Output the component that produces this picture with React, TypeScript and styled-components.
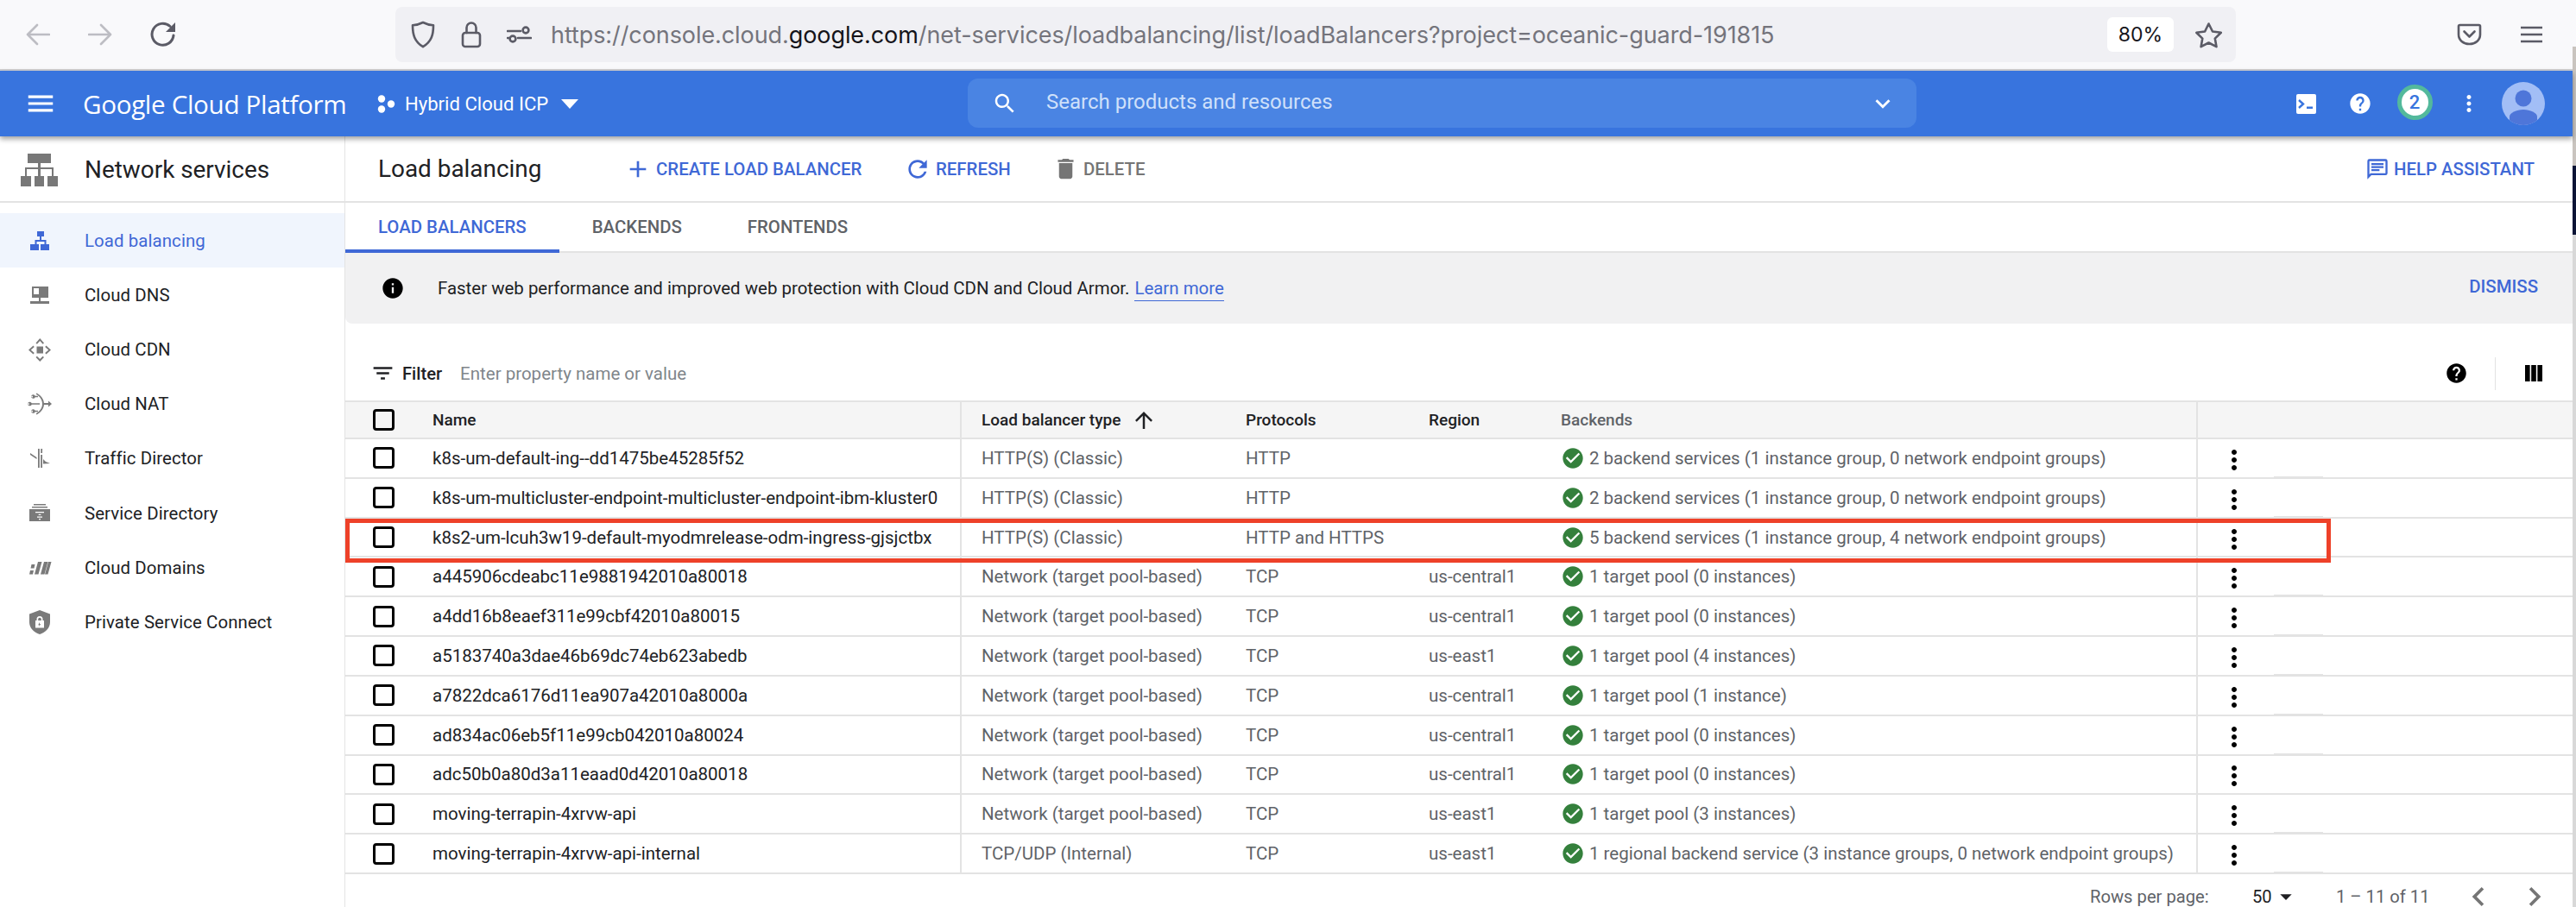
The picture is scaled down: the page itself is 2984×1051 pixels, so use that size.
import React from "react";
import styled, { createGlobalStyle } from "styled-components";

const Global = createGlobalStyle`
  html, body { margin: 0; padding: 0; background: #fff; }
  body { font-family: Roboto, "Liberation Sans", sans-serif; color: #202124; }
  * { box-sizing: border-box; }
`;

const BLUE = "#3f68d6";
const GREY = "#757575";
const LINE = "#e3e3e3";

const P = {
  menu: "M3 18h18v-2H3v2zm0-5h18v-2H3v2zm0-7v2h18V6H3z",
  search: "M15.5 14h-.79l-.28-.27C15.41 12.59 16 11.11 16 9.5 16 5.91 13.09 3 9.5 3S3 5.91 3 9.5 5.91 16 9.5 16c1.61 0 3.09-.59 4.23-1.57l.27.28v.79l5 4.99L20.49 19l-4.99-5zm-6 0C7.01 14 5 11.99 5 9.5S7.01 5 9.5 5 14 7.01 14 9.5 11.99 14 9.5 14z",
  refresh: "M17.65 6.35C16.2 4.9 14.21 4 12 4c-4.42 0-7.99 3.58-7.99 8s3.57 8 7.99 8c3.73 0 6.84-2.55 7.73-6h-2.08c-.82 2.33-3.04 4-5.65 4-3.31 0-6-2.69-6-6s2.69-6 6-6c1.66 0 3.14.69 4.22 1.78L13 11h7V4l-2.35 2.35z",
  del: "M6 19c0 1.1.9 2 2 2h8c1.1 0 2-.9 2-2V7H6v12zM19 4h-3.5l-1-1h-5l-1 1H5v2h14V4z",
  help: "M12 2C6.48 2 2 6.48 2 12s4.48 10 10 10 10-4.48 10-10S17.52 2 12 2zm1 17h-2v-2h2v2zm2.07-7.75l-.9.92C13.45 12.9 13 13.5 13 15h-2v-.5c0-1.1.45-2.1 1.17-2.83l1.24-1.26c.37-.36.59-.86.59-1.41 0-1.1-.9-2-2-2s-2 .9-2 2H8c0-2.21 1.79-4 4-4s4 1.79 4 4c0 .88-.36 1.68-.93 2.25z",
  info: "M12 2C6.48 2 2 6.48 2 12s4.48 10 10 10 10-4.48 10-10S17.52 2 12 2zm1 15h-2v-6h2v6zm0-8h-2V7h2v2z",
  more: "M12 8c1.1 0 2-.9 2-2s-.9-2-2-2-2 .9-2 2 .9 2 2 2zm0 2c-1.1 0-2 .9-2 2s.9 2 2 2 2-.9 2-2-.9-2-2-2zm0 6c-1.1 0-2 .9-2 2s.9 2 2 2 2-.9 2-2-.9-2-2-2z",
  check: "M12 2C6.48 2 2 6.48 2 12s4.48 10 10 10 10-4.48 10-10S17.52 2 12 2zm-2 15l-5-5 1.41-1.41L10 14.17l7.59-7.59L19 8l-9 9z",
  filter: "M10 18h4v-2h-4v2zM3 6v2h18V6H3zm3 7h12v-2H6v2z",
  up: "M4 12l1.41 1.41L11 7.83V20h2V7.83l5.58 5.59L20 12l-8-8-8 8z",
  add: "M19 13h-6v6h-2v-6H5v-2h6V5h2v6h6v2z",
  left: "M15.41 7.41L14 6l-6 6 6 6 1.41-1.41L10.83 12z",
  right: "M10 6L8.59 7.41 13.17 12l-4.58 4.59L10 18l6-6z",
  drop: "M7 10l5 5 5-5z",
  expand: "M16.59 8.59L12 13.17 7.41 8.59 6 10l6 6 6-6z",
  assistant: "M20 2H4a2 2 0 0 0-2 2v18l4-4h14a2 2 0 0 0 2-2V4a2 2 0 0 0-2-2zm0 14H5.2L4 17.2V4h16v12zM6 12h8v2H6zM6 9h12v2H6zM6 6h12v2H6z",
};

const Svg = styled.svg<{ $c?: string }>`
  display: block;
  flex: none;
  fill: ${(p) => p.$c || "currentColor"};
`;

function Ic({ d, s, c }: { d: string; s: number; c?: string }) {
  return (
    <Svg viewBox="0 0 24 24" width={s} height={s} $c={c}>
      <path d={d} />
    </Svg>
  );
}

const Page = styled.div`
  width: 2984px;
  height: 1051px;
  overflow: hidden;
  display: flex;
  background: #fff;
`;
const Main = styled.div`
  width: 2980px;
  flex: none;
  display: flex;
  flex-direction: column;
`;
const Edge = styled.div`
  width: 4px;
  flex: none;
  display: flex;
  flex-direction: column;
  background: #d8d8d8;
`;
const EdgeTop = styled.div`
  height: 54px;
  background: #f9f9fb;
`;
const EdgeMid = styled.div`
  height: 138px;
  background: #c9c4bf;
`;
const EdgeDark = styled.div`
  height: 80px;
  background: #0b1436;
`;

/* browser bar */
const BrowserBar = styled.div`
  height: 82px;
  flex: none;
  background: #f9f9fb;
  border-bottom: 2px solid #cfcfd2;
  display: flex;
  align-items: flex-start;
  padding-left: 30px;
`;
const NavGroup = styled.div`
  width: 428px;
  height: 80px;
  display: flex;
  align-items: center;
  gap: 44px;
`;
const UrlBar = styled.div`
  width: 2132px;
  height: 64px;
  margin-top: 8px;
  background: #f0f0f4;
  border-radius: 8px;
  display: flex;
  align-items: center;
  padding: 0 15px 0 17px;
`;
const SecIcons = styled.div`
  display: flex;
  align-items: center;
  gap: 29px;
  color: #5b5b66;
`;
const UrlText = styled.div`
  margin-left: 22px;
  font: 400 27px "Inter", sans-serif;
  letter-spacing: -0.08px;
  color: #74747c;
  white-space: nowrap;
  flex: 1;
`;
const UrlHost = styled.span`
  color: #15141a;
`;
const ZoomBadge = styled.div`
  width: 77px;
  height: 40px;
  background: #fff;
  border-radius: 6px;
  display: flex;
  align-items: center;
  justify-content: center;
  font: 400 23px "Inter", sans-serif;
  color: #15141a;
  margin-right: 24px;
`;
const ToolGroup = styled.div`
  height: 80px;
  margin-left: 256px;
  display: flex;
  align-items: center;
  gap: 45px;
  color: #5b5b66;
`;
const Stroke = styled.svg`
  display: block;
  flex: none;
  fill: none;
  stroke: currentColor;
  stroke-width: 2.6;
  stroke-linecap: round;
  stroke-linejoin: round;
`;
const Faded = styled(Stroke)`
  color: #bdbdc3;
`;
const Dark = styled(Stroke)`
  color: #5b5b66;
`;

/* top bar */
const TopBar = styled.div`
  height: 76px;
  flex: none;
  background: #3874de;
  box-shadow: 0 3px 6px rgba(0, 0, 0, 0.38);
  position: relative;
  z-index: 2;
  display: flex;
  align-items: center;
  color: #fff;
`;
const TopLeft = styled.div`
  width: 1121px;
  flex: none;
  display: flex;
  align-items: center;
  padding-left: 28px;
`;
const Brand = styled.div`
  width: 341px;
  margin-left: 30px;
  flex: none;
  font: 400 29.6px "Open Sans", sans-serif;
  letter-spacing: -0.33px;
  white-space: nowrap;
`;
const ProjectName = styled.div`
  margin-left: 11px;
  font: 400 22.1px Roboto, sans-serif;
  white-space: nowrap;
`;
const Caret = styled.svg`
  margin-left: 15px;
  fill: #fff;
`;
const SearchBox = styled.div`
  width: 1099px;
  height: 57px;
  flex: none;
  margin-top: -1px;
  background: #4a84e3;
  border-radius: 12px;
  display: flex;
  align-items: center;
  padding: 0 22px 0 28px;
`;
const SearchText = styled.div`
  margin-left: 33px;
  padding-bottom: 3px;
  flex: 1;
  font: 400 24px Roboto, sans-serif;
  color: #cfe0fa;
`;
const TopRight = styled.div`
  margin-left: auto;
  padding-right: 25.5px;
  display: flex;
  align-items: center;
`;
const TopSlot = styled.div`
  width: 63px;
  height: 76px;
  display: flex;
  align-items: center;
  justify-content: center;
`;
const Badge = styled.div`
  width: 41px;
  height: 41px;
  margin-top: -3px;
  border-radius: 50%;
  background: #fff;
  border: 5px solid #53b99c;
  display: flex;
  align-items: center;
  justify-content: center;
  font: 500 22px Roboto, sans-serif;
  color: #3874de;
`;

/* body */
const Body = styled.div`
  flex: 1;
  display: flex;
  min-height: 0;
`;
const Sidebar = styled.nav`
  width: 400px;
  flex: none;
  border-right: 1px solid ${LINE};
`;
const SideHead = styled.div`
  height: 77px;
  border-bottom: 2px solid ${LINE};
  display: flex;
  align-items: center;
  padding: 2px 0 0 24px;
  gap: 31px;
`;
const SideTitle = styled.div`
  font: 400 27.9px Roboto, sans-serif;
  color: #202124;
  white-space: nowrap;
`;
const SideList = styled.div`
  padding-top: 12px;
`;
const SideItem = styled.div<{ $active?: boolean }>`
  height: 63.2px;
  display: flex;
  align-items: center;
  padding-left: 32px;
  gap: 38px;
  font: 400 20.4px Roboto, sans-serif;
  letter-spacing: 0.1px;
  background: ${(p) => (p.$active ? "#f0f5fd" : "transparent")};
  color: ${(p) => (p.$active ? BLUE : "#202124")};
`;
const SideGlyph = styled.svg<{ $active?: boolean }>`
  display: block;
  flex: none;
  fill: currentColor;
  color: ${(p) => (p.$active ? BLUE : "#7a7a7a")};
`;

const Content = styled.div`
  flex: 1;
  min-width: 0;
  display: flex;
  flex-direction: column;
`;
const PageHead = styled.div`
  height: 77px;
  flex: none;
  border-bottom: 2px solid ${LINE};
  display: flex;
  align-items: center;
  padding-left: 38px;
`;
const PageTitle = styled.div`
  width: 285px;
  flex: none;
  font: 400 27.9px Roboto, sans-serif;
  color: #202124;
`;
const ActionBtn = styled.div<{ $muted?: boolean; $w?: number }>`
  width: ${(p) => (p.$w ? `${p.$w}px` : "auto")};
  flex: none;
  display: flex;
  align-items: center;
  gap: 5px;
  font: 500 20.4px Roboto, sans-serif;
  color: ${(p) => (p.$muted ? GREY : BLUE)};
  white-space: nowrap;
`;
const HeadEnd = styled(ActionBtn)`
  margin-left: auto;
  padding-right: 44px;
`;
const TabBar = styled.div`
  height: 58px;
  flex: none;
  border-bottom: 2px solid ${LINE};
  display: flex;
`;
const Tab = styled.div<{ $active?: boolean }>`
  height: 58px;
  padding: 1px 38px 0;
  display: flex;
  align-items: center;
  font: 500 20.4px Roboto, sans-serif;
  color: ${(p) => (p.$active ? BLUE : "#5f6368")};
  border-bottom: 4px solid ${(p) => (p.$active ? BLUE : "transparent")};
`;
const Banner = styled.div`
  height: 82px;
  flex: none;
  background: #f1f1f2;
  border-bottom-left-radius: 8px;
  display: flex;
  align-items: center;
  padding: 0 40px 0 41px;
  font: 400 20.45px Roboto, sans-serif;
  color: #202124;
`;
const BannerText = styled.div`
  margin-left: 38px;
  flex: 1;
`;
const LearnMore = styled.span`
  color: ${BLUE};
  border-bottom: 1px solid ${BLUE};
  padding-bottom: 2px;
  margin-left: 6px;
`;
const Dismiss = styled.div`
  padding-bottom: 4px;
  font: 500 20.4px Roboto, sans-serif;
  color: ${BLUE};
`;
const FilterRow = styled.div`
  height: 89px;
  flex: none;
  display: flex;
  align-items: center;
  padding: 26px 35px 0 29px;
`;
const FilterLabel = styled.div`
  margin-left: 8px;
  font: 500 20.2px Roboto, sans-serif;
  color: #202124;
`;
const FilterInput = styled.div`
  margin-left: 21px;
  flex: 1;
  font: 400 20.5px Roboto, sans-serif;
  color: #80868b;
`;
const FilterDivider = styled.div`
  width: 1px;
  height: 38px;
  background: ${LINE};
  margin: 0 34px 0 31px;
`;

/* table */
const Table = styled.div`
  flex: none;
  display: flex;
  flex-direction: column;
`;
const Row = styled.div<{ $head?: boolean }>`
  height: ${(p) => (p.$head ? "45px" : "45.82px")};
  flex: none;
  position: relative;
  display: grid;
  grid-template-columns: 101px 611px 331px 212px 153px 736px 1fr;
  align-items: stretch;
  background: ${(p) => (p.$head ? "#f5f5f5" : "#fff")};
  border-top: ${(p) => (p.$head ? `2px solid ${LINE}` : "none")};
  border-bottom: 2px solid ${LINE};
`;
const Cell = styled.div<{ $tone?: string; $head?: boolean; $rule?: boolean }>`
  display: flex;
  align-items: center;
  white-space: nowrap;
  min-width: 0;
  font-family: Roboto, sans-serif;
  font-size: ${(p) => (p.$head ? "19px" : "20.5px")};
  font-weight: ${(p) => (p.$head ? 500 : 400)};
  color: ${(p) => p.$tone || "#5f6368"};
  ${(p) => (p.$rule ? `border-left: 2px solid ${LINE}; padding-left: 23px;` : "")}
`;
const CheckCell = styled(Cell)`
  padding-left: 32px;
`;
const Box = styled.div`
  width: 25px;
  height: 25px;
  border: 3.5px solid #000;
  border-radius: 4px;
`;
const SortArrow = styled.span`
  margin-left: 12px;
  display: flex;
`;
const Status = styled.span`
  display: flex;
  align-items: center;
  gap: 5px;
`;
const ActionCell = styled.div<{ $tick?: boolean }>`
  position: relative;
  border-left: 2px solid ${LINE};
  display: flex;
  align-items: center;
  padding: 4px 0 0 24px;
  &::after {
    content: "";
    display: ${(p) => (p.$tick ? "block" : "none")};
    position: absolute;
    left: 88px;
    width: 57px;
    bottom: 0;
    height: 1px;
    background: ${LINE};
  }
`;
const Highlight = styled.div`
  position: absolute;
  left: 0;
  top: 0;
  width: 2300px;
  height: 51px;
  border: 5px solid #ee4129;
  z-index: 1;
`;

const Footer = styled.div`
  height: 50px;
  flex: none;
  display: flex;
  align-items: center;
  justify-content: flex-end;
  padding: 2px 22px 0 0;
  font: 400 20.2px Roboto, sans-serif;
  color: #5f6368;
`;
const PerPage = styled.div`
  width: 188px;
`;
const PerValue = styled.div`
  display: flex;
  align-items: center;
  color: #202124;
  width: 97px;
`;
const PageRange = styled.div`
  width: 143px;
`;
const PagerBtns = styled.div`
  display: flex;
  gap: 21px;
`;

type R = { name: string; type: string; proto: string; region: string; back: string };
const svc2 = "2 backend services (1 instance group, 0 network endpoint groups)";
const NET = "Network (target pool-based)";
const rows: R[] = [
  { name: "k8s-um-default-ing--dd1475be45285f52", type: "HTTP(S) (Classic)", proto: "HTTP", region: "", back: svc2 },
  { name: "k8s-um-multicluster-endpoint-multicluster-endpoint-ibm-kluster0", type: "HTTP(S) (Classic)", proto: "HTTP", region: "", back: svc2 },
  { name: "k8s2-um-lcuh3w19-default-myodmrelease-odm-ingress-gjsjctbx", type: "HTTP(S) (Classic)", proto: "HTTP and HTTPS", region: "", back: "5 backend services (1 instance group, 4 network endpoint groups)" },
  { name: "a445906cdeabc11e9881942010a80018", type: NET, proto: "TCP", region: "us-central1", back: "1 target pool (0 instances)" },
  { name: "a4dd16b8eaef311e99cbf42010a80015", type: NET, proto: "TCP", region: "us-central1", back: "1 target pool (0 instances)" },
  { name: "a5183740a3dae46b69dc74eb623abedb", type: NET, proto: "TCP", region: "us-east1", back: "1 target pool (4 instances)" },
  { name: "a7822dca6176d11ea907a42010a8000a", type: NET, proto: "TCP", region: "us-central1", back: "1 target pool (1 instance)" },
  { name: "ad834ac06eb5f11e99cb042010a80024", type: NET, proto: "TCP", region: "us-central1", back: "1 target pool (0 instances)" },
  { name: "adc50b0a80d3a11eaad0d42010a80018", type: NET, proto: "TCP", region: "us-central1", back: "1 target pool (0 instances)" },
  { name: "moving-terrapin-4xrvw-api", type: NET, proto: "TCP", region: "us-east1", back: "1 target pool (3 instances)" },
  { name: "moving-terrapin-4xrvw-api-internal", type: "TCP/UDP (Internal)", proto: "TCP", region: "us-east1", back: "1 regional backend service (3 instance groups, 0 network endpoint groups)" },
];

const sideIcons: Record<string, React.ReactNode> = {
  lb: <path d="M11 3h8v6h-3v4h5.5v5H25v7H15v-7h4.5v-3h-9v3H13v7H3v-7h5.5v-5H14V9h-3z" />,
  dns: <path fillRule="evenodd" d="M5 4h19v13h-9v4h10v3H3v-3h10v-4H5zm2 2v7h6V6z" />,
  cdn: (
    <g>
      <rect x="10.5" y="10.5" width="7.5" height="8" />
      <path d="M6.5 9.5 1 14.5l5.5 5 1.3-1.4-4-3.6 4-3.6zM21.500 9.500l5.500 5-5.500 5-1.300-1.400 4-3.600-4-3.600zM9.500 6.500 14.250 1 19 6.500l-1.400 1.200-3.350-3.800-3.350 3.800zM9.500 23 14.250 28 19 23l-1.400-1.300-3.350 3.400-3.350-3.400z" />
    </g>
  ),
  nat: (
    <g>
      <path d="M10.500 1.500c5.500 3 8.500 7.500 8.500 12.500s-3 9.500-8.500 12.500l-.8-1.300c4.700-2.800 7.300-6.700 7.300-11.200S14.400 5.600 9.700 2.800z" />
      <path d="M19 13h5V10.500l4 3.500-4 3.500V15h-5z" />
      <path fillRule="evenodd" d="M4 5.500a2.500 2.500 0 0 1 4.800-.8H12v1.600H8.800A2.500 2.500 0 0 1 4 5.500zm2 0a.8.800 0 1 0 0 .1zM0 14a2.500 2.500 0 0 1 4.800-.8H14v1.600H4.800A2.500 2.500 0 0 1 0 14zm2 0a.8.800 0 1 0 0 .1zM4 22.500a2.500 2.500 0 0 1 4.800-.8H12v1.600H8.800A2.500 2.500 0 0 1 4 22.500zm2 0a.8.800 0 1 0 0 .1z" />
    </g>
  ),
  td: <path d="M12 3h1.800v22H12zM15.300 3h1.800l-.1 5h-1.700zM15.200 10h1.800v15h-1.800zM3 8l7.500 5v2L3 10zM26 20l-8 .5v-5.500l3 3z" />,
  sd: (
    <g>
      <path d="M7 3h14v1.500H7zM5 6h18v1.500H5z" />
      <path fillRule="evenodd" d="M2 9h24v14H2zm7 3v1.300h10V12zm5 2.500-2 1.500h4zm-3 3v1.200h6V17.500zm2 2.500v1.300h2V20z" />
    </g>
  ),
  dom: (
    <g>
      <path d="M3 17h4l-1 4.500H2zM4.500 10h4l-1 4.500h-4z" />
      <path d="M12 7h4.500l-4 14.500H8zM19 7h4.500l-4 14.500H15zM24 7h3.500l-4 14.500H20z" />
    </g>
  ),
  psc: <path fillRule="evenodd" d="M14 0 26 4.500V14c0 6.500-5 11.500-12 14C7 25.500 2 20.500 2 14V4.500zm-3.500 12v-1.500a3.500 3.500 0 0 1 7 0V12H19v8.500H9V12zm1.700 0h3.600v-1.500a1.800 1.800 0 0 0-3.600 0zM14 14l-1.800 3.200h1.300L13.200 19l2-3h-1.200z" />,
};

const sideItems: { key: string; label: string; active?: boolean }[] = [
  { key: "lb", label: "Load balancing", active: true },
  { key: "dns", label: "Cloud DNS" },
  { key: "cdn", label: "Cloud CDN" },
  { key: "nat", label: "Cloud NAT" },
  { key: "td", label: "Traffic Director" },
  { key: "sd", label: "Service Directory" },
  { key: "dom", label: "Cloud Domains" },
  { key: "psc", label: "Private Service Connect" },
];

export default function App() {
  return (
    <Page>
      <Global />
      <Main>
        <BrowserBar>
          <NavGroup>
            <Faded width="28" height="28" viewBox="0 0 28 28"><path d="M27 14H2M13 3 2 14l11 11" /></Faded>
            <Faded width="28" height="28" viewBox="0 0 28 28"><path d="M1 14h25M15 3l11 11-11 11" /></Faded>
            <Dark width="30" height="30" viewBox="0 0 30 30">
              <path d="M27 16a12.500 12.500 0 1 1-4-10.500" strokeWidth="3" />
              <path d="M29 1v11H18z" fill="#5b5b66" stroke="none" />
            </Dark>
          </NavGroup>
          <UrlBar>
            <SecIcons>
              <Stroke width="30" height="32" viewBox="0 0 30 32" strokeWidth="2.400">
                <path d="M15 2c4 2 8 3.200 12 3.200 0 11-2 19-12 25C5 24 3 16 3 5.200 7 5.200 11 4 15 2z" />
              </Stroke>
              <Stroke width="24" height="32" viewBox="0 0 24 32">
                <path d="M6.500 14V8a5.500 5.500 0 0 1 11 0v6" />
                <rect x="2" y="14" width="20" height="16" rx="3" />
              </Stroke>
              <Stroke width="29" height="20" viewBox="0 0 29 20">
                <path d="M1 6h15M1 14h2M13 14h15" />
                <circle cx="22" cy="5" r="3.400" />
                <circle cx="7" cy="15" r="3.400" />
              </Stroke>
            </SecIcons>
            <UrlText>
              https://console.cloud.<UrlHost>google.com</UrlHost>/net-services/loadbalancing/list/loadBalancers?project=oceanic-guard-191815
            </UrlText>
            <ZoomBadge>80%</ZoomBadge>
            <Dark width="33" height="31" viewBox="0 0 33 31">
              <path d="M16.500 2.500 21 11.500l9.800 1.300-7 6.800 1.700 9.600-9-4.700-8.900 4.700 1.700-9.600-7-6.800 9.800-1.300z" />
            </Dark>
          </UrlBar>
          <ToolGroup>
            <Stroke width="29" height="26" viewBox="0 0 29 26">
              <path d="M2 3.500C2 2.500 2.700 2 3.500 2h22c.8 0 1.500.5 1.500 1.500V13c0 6.500-5.500 11-12.500 11S2 19.500 2 13z" />
              <path d="m8.500 9.500 6 6 6-6" />
            </Stroke>
            <Stroke width="25" height="20" viewBox="0 0 25 20" strokeWidth="3">
              <path d="M0 2h25M0 10h25M0 18h25" />
            </Stroke>
          </ToolGroup>
        </BrowserBar>

        <TopBar>
          <TopLeft>
            <Ic d={P.menu} s={38} />
            <Brand>Google Cloud Platform</Brand>
            <svg width="21" height="21" viewBox="0 0 21 21" fill="#fff">
              <circle cx="5" cy="4.500" r="4.200" />
              <circle cx="5" cy="16.500" r="4.200" />
              <circle cx="16" cy="10.500" r="4.200" />
            </svg>
            <ProjectName>Hybrid Cloud ICP</ProjectName>
            <Caret width="20" height="11" viewBox="0 0 20 11">
              <path d="M0 0h20L10 11z" />
            </Caret>
          </TopLeft>
          <SearchBox>
            <Ic d={P.search} s={30} />
            <SearchText>Search products and resources</SearchText>
            <Ic d={P.expand} s={34} />
          </SearchBox>
          <TopRight>
            <TopSlot>
              <svg width="23" height="23" viewBox="0 0 23 23">
                <rect width="23" height="23" rx="2" fill="#fff" />
                <path d="M3 7l5 4.500L3 16" fill="none" stroke="#3874de" strokeWidth="2.400" />
                <path d="M12 14.500h7v2.500h-7z" fill="#3874de" />
              </svg>
            </TopSlot>
            <TopSlot><Ic d={P.help} s={28} c="#fff" /></TopSlot>
            <TopSlot><Badge>2</Badge></TopSlot>
            <TopSlot><Ic d={P.more} s={30} c="#fff" /></TopSlot>
            <TopSlot>
              <svg width="50" height="50" viewBox="0 0 50 50">
                <defs>
                  <clipPath id="av"><circle cx="25" cy="25" r="25" /></clipPath>
                </defs>
                <circle cx="25" cy="25" r="25" fill="#a2bef6" />
                <g clipPath="url(#av)" fill="#4e76d9">
                  <circle cx="25" cy="19" r="9.500" />
                  <path d="M9 50V40c0-4 8-8 16-8s16 4 16 8v10z" />
                </g>
              </svg>
            </TopSlot>
          </TopRight>
        </TopBar>

        <Body>
          <Sidebar>
            <SideHead>
              <svg width="43" height="38" viewBox="0 0 43 38" fill="#787878">
                <path d="M8 0h27v11H23v5h15v10h5v12H31V26h5v-8H23v8h4v12H16V26h4v-8H7v8h5v12H0V26h5V16h15v-5H8z" />
              </svg>
              <SideTitle>Network services</SideTitle>
            </SideHead>
            <SideList>
              {sideItems.map((it) => (
                <SideItem key={it.key} $active={it.active}>
                  <SideGlyph width="28" height="28" viewBox="0 0 28 28" $active={it.active}>
                    {sideIcons[it.key]}
                  </SideGlyph>
                  {it.label}
                </SideItem>
              ))}
            </SideList>
          </Sidebar>

          <Content>
            <PageHead>
              <PageTitle>Load balancing</PageTitle>
              <ActionBtn $w={324}><Ic d={P.add} s={32} c={BLUE} />CREATE LOAD BALANCER</ActionBtn>
              <ActionBtn $w={172}><Ic d={P.refresh} s={32} c={BLUE} />REFRESH</ActionBtn>
              <ActionBtn $muted><Ic d={P.del} s={31} c={GREY} />DELETE</ActionBtn>
              <HeadEnd><Ic d={P.assistant} s={28} c={BLUE} />HELP ASSISTANT</HeadEnd>
            </PageHead>
            <TabBar>
              <Tab $active>LOAD BALANCERS</Tab>
              <Tab>BACKENDS</Tab>
              <Tab>FRONTENDS</Tab>
            </TabBar>
            <Banner>
              <Ic d={P.info} s={28} c="#000" />
              <BannerText>
                Faster web performance and improved web protection with Cloud CDN and Cloud Armor.
                <LearnMore>Learn more</LearnMore>
              </BannerText>
              <Dismiss>DISMISS</Dismiss>
            </Banner>
            <FilterRow>
              <Ic d={P.filter} s={29} c="#202124" />
              <FilterLabel>Filter</FilterLabel>
              <FilterInput>Enter property name or value</FilterInput>
              <Ic d={P.help} s={27} c="#000" />
              <FilterDivider />
              <svg width="20" height="19" viewBox="0 0 20 19" fill="#000">
                <rect width="5.600" height="19" />
                <rect x="7.200" width="5.600" height="19" />
                <rect x="14.400" width="5.600" height="19" />
              </svg>
            </FilterRow>
            <Table>
              <Row $head>
                <CheckCell><Box /></CheckCell>
                <Cell $head $tone="#202124">Name</Cell>
                <Cell $head $tone="#202124" $rule>
                  Load balancer type
                  <SortArrow><Ic d={P.up} s={30} c="#202124" /></SortArrow>
                </Cell>
                <Cell $head $tone="#202124">Protocols</Cell>
                <Cell $head $tone="#202124">Region</Cell>
                <Cell $head>Backends</Cell>
                <ActionCell />
              </Row>
              {rows.map((r, i) => (
                <Row key={r.name}>
                  <CheckCell><Box /></CheckCell>
                  <Cell $tone="#202124">{r.name}</Cell>
                  <Cell $rule>{r.type}</Cell>
                  <Cell>{r.proto}</Cell>
                  <Cell>{r.region}</Cell>
                  <Cell>
                    <Status><Ic d={P.check} s={28} c="#34803c" />{r.back}</Status>
                  </Cell>
                  <ActionCell $tick={i !== 2 && i !== 8}><Ic d={P.more} s={36} c="#000" /></ActionCell>
                  {i === 2 && <Highlight />}
                </Row>
              ))}
            </Table>
            <Footer>
              <PerPage>Rows per page:</PerPage>
              <PerValue>50<Ic d={P.drop} s={32} c="#202124" /></PerValue>
              <PageRange>1 – 11 of 11</PageRange>
              <PagerBtns>
                <Ic d={P.left} s={44} c="#757575" />
                <Ic d={P.right} s={44} c="#757575" />
              </PagerBtns>
            </Footer>
          </Content>
        </Body>
      </Main>
      <Edge>
        <EdgeTop />
        <EdgeMid />
        <EdgeDark />
      </Edge>
    </Page>
  );
}
